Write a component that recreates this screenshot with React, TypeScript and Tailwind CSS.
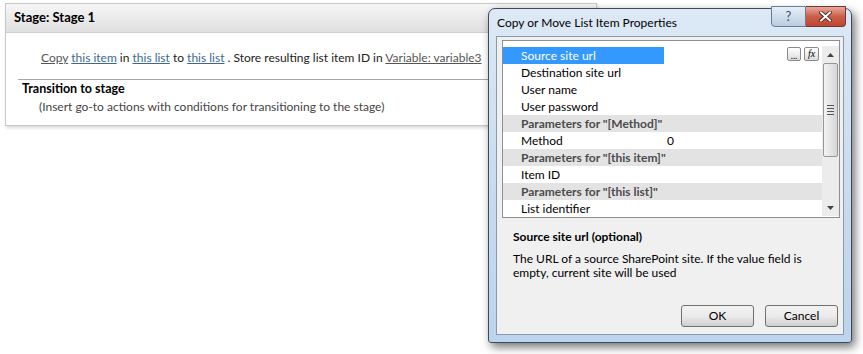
import React from "react";

const ui = { fontFamily: 'Lato, "Open Sans", "Noto Sans", sans-serif' };

function Row({ label, value, selected, group }: { label: string; value?: string; selected?: boolean; group?: boolean }) {
  if (group) {
    return (
      <div className="h-[17px] flex items-center bg-[#e3e3e3] text-[#4b4b4b] pl-[18px] text-[12px] leading-none font-bold">
        {label}
      </div>
    );
  }
  return (
    <div className="h-[17px] flex items-center text-[12px] leading-none text-black">
      <div className={"w-[161px] h-full flex items-center pl-[18px] " + (selected ? "bg-[#3399ff] text-white" : "")}>{label}</div>
      <div className="pl-[3px]">{value}</div>
    </div>
  );
}

export default function App() {
  return (
    <div className="relative w-[863px] h-[354px] bg-white overflow-hidden" style={ui}>
      {/* Stage panel */}
      <div className="ml-[5px] mt-[3px] w-[592px] h-[123px] border border-[#c8c8c8] bg-white shadow-[1px_2px_3px_rgba(0,0,0,0.15)]">
        <div className="h-[29px] bg-gradient-to-b from-[#f6f6f6] to-[#e0e0e0] border-b border-[#cfcfcf] flex items-center pl-[8px] text-[13px] font-bold text-black">
          Stage: Stage 1
        </div>
        <div className="pl-[35px] pt-[19px] text-[12px] text-[#222] leading-none h-[46px]">
          <span className="underline text-[#555]">Copy</span>{" "}
          <span className="underline text-[#3a6890]">this item</span> in{" "}
          <span className="underline text-[#3a6890]">this list</span> to{" "}
          <span className="underline text-[#3a6890]">this list</span> . Store resulting list item ID in{" "}
          <span className="underline text-[#555]">Variable: variable3</span>
        </div>
        <div className="ml-[12px] border-t border-[#a8a8a8] pl-[4px] pt-[1px]">
          <div className="text-[12.5px] font-bold text-black leading-[16px]">Transition to stage</div>
          <div className="text-[12px] text-[#444] leading-[16px] pl-[17px] pt-[2px]">
            (Insert go-to actions with conditions for transitioning to the stage)
          </div>
        </div>
      </div>

      {/* Dialog */}
      <div className="absolute left-[488px] top-[8px] w-[364px] h-[335px] rounded-t-[7px] rounded-b-[3px] border border-[#3d4a58] bg-gradient-to-b from-[#dde9f5] via-[#c9dcf0] to-[#bcd4ec] shadow-[3px_4px_10px_rgba(0,0,0,0.55)] flex flex-col">
        <div className="h-[27px] flex items-start pl-[8px] relative">
          <div className="pt-[8px] text-[12px] text-black leading-none">Copy or Move List Item Properties</div>
          <div className="absolute right-[5px] top-[-3px] flex">
            <div className="w-[35px] h-[21px] rounded-bl-[4px] border border-[#6a7d92] bg-gradient-to-b from-[#e6eef7] to-[#bccde0] flex items-center justify-center text-[#3c4d63] text-[13px] leading-none">
              ?
            </div>
            <div className="w-[40px] h-[21px] rounded-br-[4px] border border-l-0 border-[#6b3a34] bg-gradient-to-b from-[#e8a99b] via-[#c95e49] to-[#c0452f] flex items-center justify-center">
              <svg width="13" height="11" viewBox="0 0 13 11">
                <path d="M2 1.5 L11 9.5 M11 1.5 L2 9.5" stroke="#3b1a14" strokeWidth="3.6" strokeLinecap="square" />
                <path d="M2 1.5 L11 9.5 M11 1.5 L2 9.5" stroke="#ffffff" strokeWidth="2" strokeLinecap="square" />
              </svg>
            </div>
          </div>
        </div>
        <div className="flex-1 mx-[7px] mb-[7px] border border-[#8a9aab] bg-[#f0f0f0] flex flex-col">
          <div className="ml-[5px] mr-[3px] mt-[3px] h-[178px] border border-[#8e8f8f] bg-white flex relative">
            <div className="flex-1 pt-[6px]">
              <Row label="Source site url" selected />
              <Row label="Destination site url" />
              <Row label="User name" />
              <Row label="User password" />
              <Row label={'Parameters for "[Method]"'} group />
              <Row label="Method" value="0" />
              <Row label={'Parameters for "[this item]"'} group />
              <Row label="Item ID" />
              <Row label={'Parameters for "[this list]"'} group />
              <Row label="List identifier" />
            </div>
            <div className="absolute left-[284px] top-[6px] flex gap-[3px]">
              <div className="w-[14px] h-[14px] rounded-[2px] border border-[#8a8a8a] bg-gradient-to-b from-white to-[#dcdcdc] flex items-end justify-center text-[9px] leading-[9px] text-black">
                ...
              </div>
              <div className="w-[15px] h-[14px] rounded-[2px] border border-[#8a8a8a] bg-gradient-to-b from-white to-[#dcdcdc] flex items-center justify-center text-[10px] leading-none text-black" style={{ fontFamily: '"Liberation Serif", serif' }}>
                <i>fx</i>
              </div>
            </div>
            <div className="w-[17px] pt-[5px] pb-[1px] bg-white flex flex-col items-center">
              <div className="w-full flex-1 bg-[#ececec] flex flex-col items-center">
                <div className="h-[17px] flex items-center justify-center">
                  <svg width="7" height="4" viewBox="0 0 7 4"><path d="M0 4 L3.5 0 L7 4 Z" fill="#444" /></svg>
                </div>
                <div className="w-[15px] h-[94px] rounded-[2px] border border-[#979797] bg-gradient-to-r from-[#f4f4f4] to-[#d6d6d6] flex flex-col items-center justify-center gap-[2px]">
                  <div className="w-[7px] h-px bg-[#555]" />
                  <div className="w-[7px] h-px bg-[#555]" />
                  <div className="w-[7px] h-px bg-[#555]" />
                  <div className="w-[7px] h-px bg-[#555]" />
                </div>
                <div className="flex-1" />
                <div className="h-[17px] flex items-center justify-center">
                  <svg width="7" height="4" viewBox="0 0 7 4"><path d="M0 0 L3.5 4 L7 0 Z" fill="#444" /></svg>
                </div>
              </div>
            </div>
          </div>
          <div className="pl-[16px] pt-[13px] text-[12px] font-bold text-black leading-none">Source site url (optional)</div>
          <div className="pl-[16px] pt-[9px] w-[306px] text-[12px] text-black leading-[14px]">
            The URL of a source SharePoint site. If the value field is empty, current site will be used
          </div>
          <div className="flex-1" />
          <div className="flex justify-end gap-[11px] pr-[5px] pb-[7px]">
            <div className="w-[73px] h-[22px] rounded-[3px] border border-[#707070] bg-gradient-to-b from-[#f2f2f2] via-[#ebebeb] to-[#cfcfcf] flex items-center justify-center text-[12px] text-black">
              OK
            </div>
            <div className="w-[73px] h-[22px] rounded-[3px] border border-[#707070] bg-gradient-to-b from-[#f2f2f2] via-[#ebebeb] to-[#cfcfcf] flex items-center justify-center text-[12px] text-black">
              Cancel
            </div>
          </div>
        </div>
      </div>
    </div>
  );
}
